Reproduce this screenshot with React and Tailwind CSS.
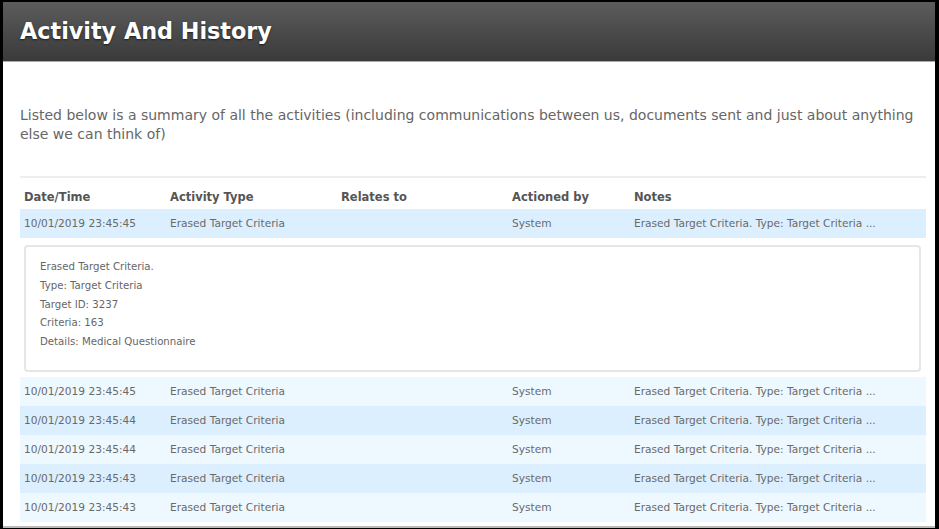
const rows = [
  { date: '10/01/2019 23:45:45', shade: 'light' },
  { date: '10/01/2019 23:45:44', shade: 'dark' },
  { date: '10/01/2019 23:45:44', shade: 'light' },
  { date: '10/01/2019 23:45:43', shade: 'dark' },
  { date: '10/01/2019 23:45:43', shade: 'light' },
];

const detailLines = [
  'Erased Target Criteria.',
  'Type: Target Criteria',
  'Target ID: 3237',
  'Criteria: 163',
  'Details: Medical Questionnaire',
];

const Row = ({ date, bg }) => (
  <div className={`flex items-center h-[29px] pl-[4px] text-[10.6px] text-[#6a6a6a] ${bg}`}>
    <div className="w-[146px]">{date}</div>
    <div className="w-[171px]">Erased Target Criteria</div>
    <div className="w-[171px]"></div>
    <div className="w-[122px]">System</div>
    <div>Erased Target Criteria. Type: Target Criteria ...</div>
  </div>
);

export default function App() {
  return (
    <div
      className="h-[529px] w-[939px] bg-black pt-[2px] pl-[3px] pr-[4px] pb-[1px] overflow-hidden"
      style={{ fontFamily: '"DejaVu Sans", Verdana, sans-serif' }}
    >
      <div className="h-full bg-white flex flex-col border-b-2 border-[#bbb]">
        {/* Header */}
        <div className="h-[60px] flex items-center pl-[17px] bg-gradient-to-b from-[#5c5c5c] to-[#3a3a3a] border-b border-[#aaa]">
          <h1 className="text-[22.3px] font-bold text-white [text-shadow:0_1px_2px_rgba(0,0,0,0.6)]">
            Activity And History
          </h1>
        </div>

        <div className="pl-[17px] pr-[9px]">
          <p className="mt-[44px] text-[14px] leading-[19px] text-[#666]">
            Listed below is a summary of all the activities (including communications between us, documents sent and just about anything else we can think of)
          </p>

          <div className="mt-[32px] border-t-2 border-[#eee]">
            {/* Column headings */}
            <div className="flex items-center h-[31px] pt-[8px] pl-[4px] text-[11.5px] font-bold text-[#555]">
              <div className="w-[146px]">Date/Time</div>
              <div className="w-[171px]">Activity Type</div>
              <div className="w-[171px]">Relates to</div>
              <div className="w-[122px]">Actioned by</div>
              <div>Notes</div>
            </div>

            <Row date="10/01/2019 23:45:45" bg="bg-[#dcefff]" />

            {/* Expanded detail */}
            <div className="mt-[7px] mb-[5px] ml-[4px] mr-[5px] h-[127px] border-2 border-[#e6e6e6] rounded-[4px] pt-[11px] pl-[14px] text-[10.2px] leading-[18.8px] text-[#666]">
              {detailLines.map((line) => (
                <div key={line}>{line}</div>
              ))}
            </div>

            {rows.map((r, i) => (
              <Row
                key={i}
                date={r.date}
                bg={r.shade === 'dark' ? 'bg-[#dcefff]' : 'bg-[#eef8ff]'}
              />
            ))}
          </div>
        </div>
      </div>
    </div>
  );
}
